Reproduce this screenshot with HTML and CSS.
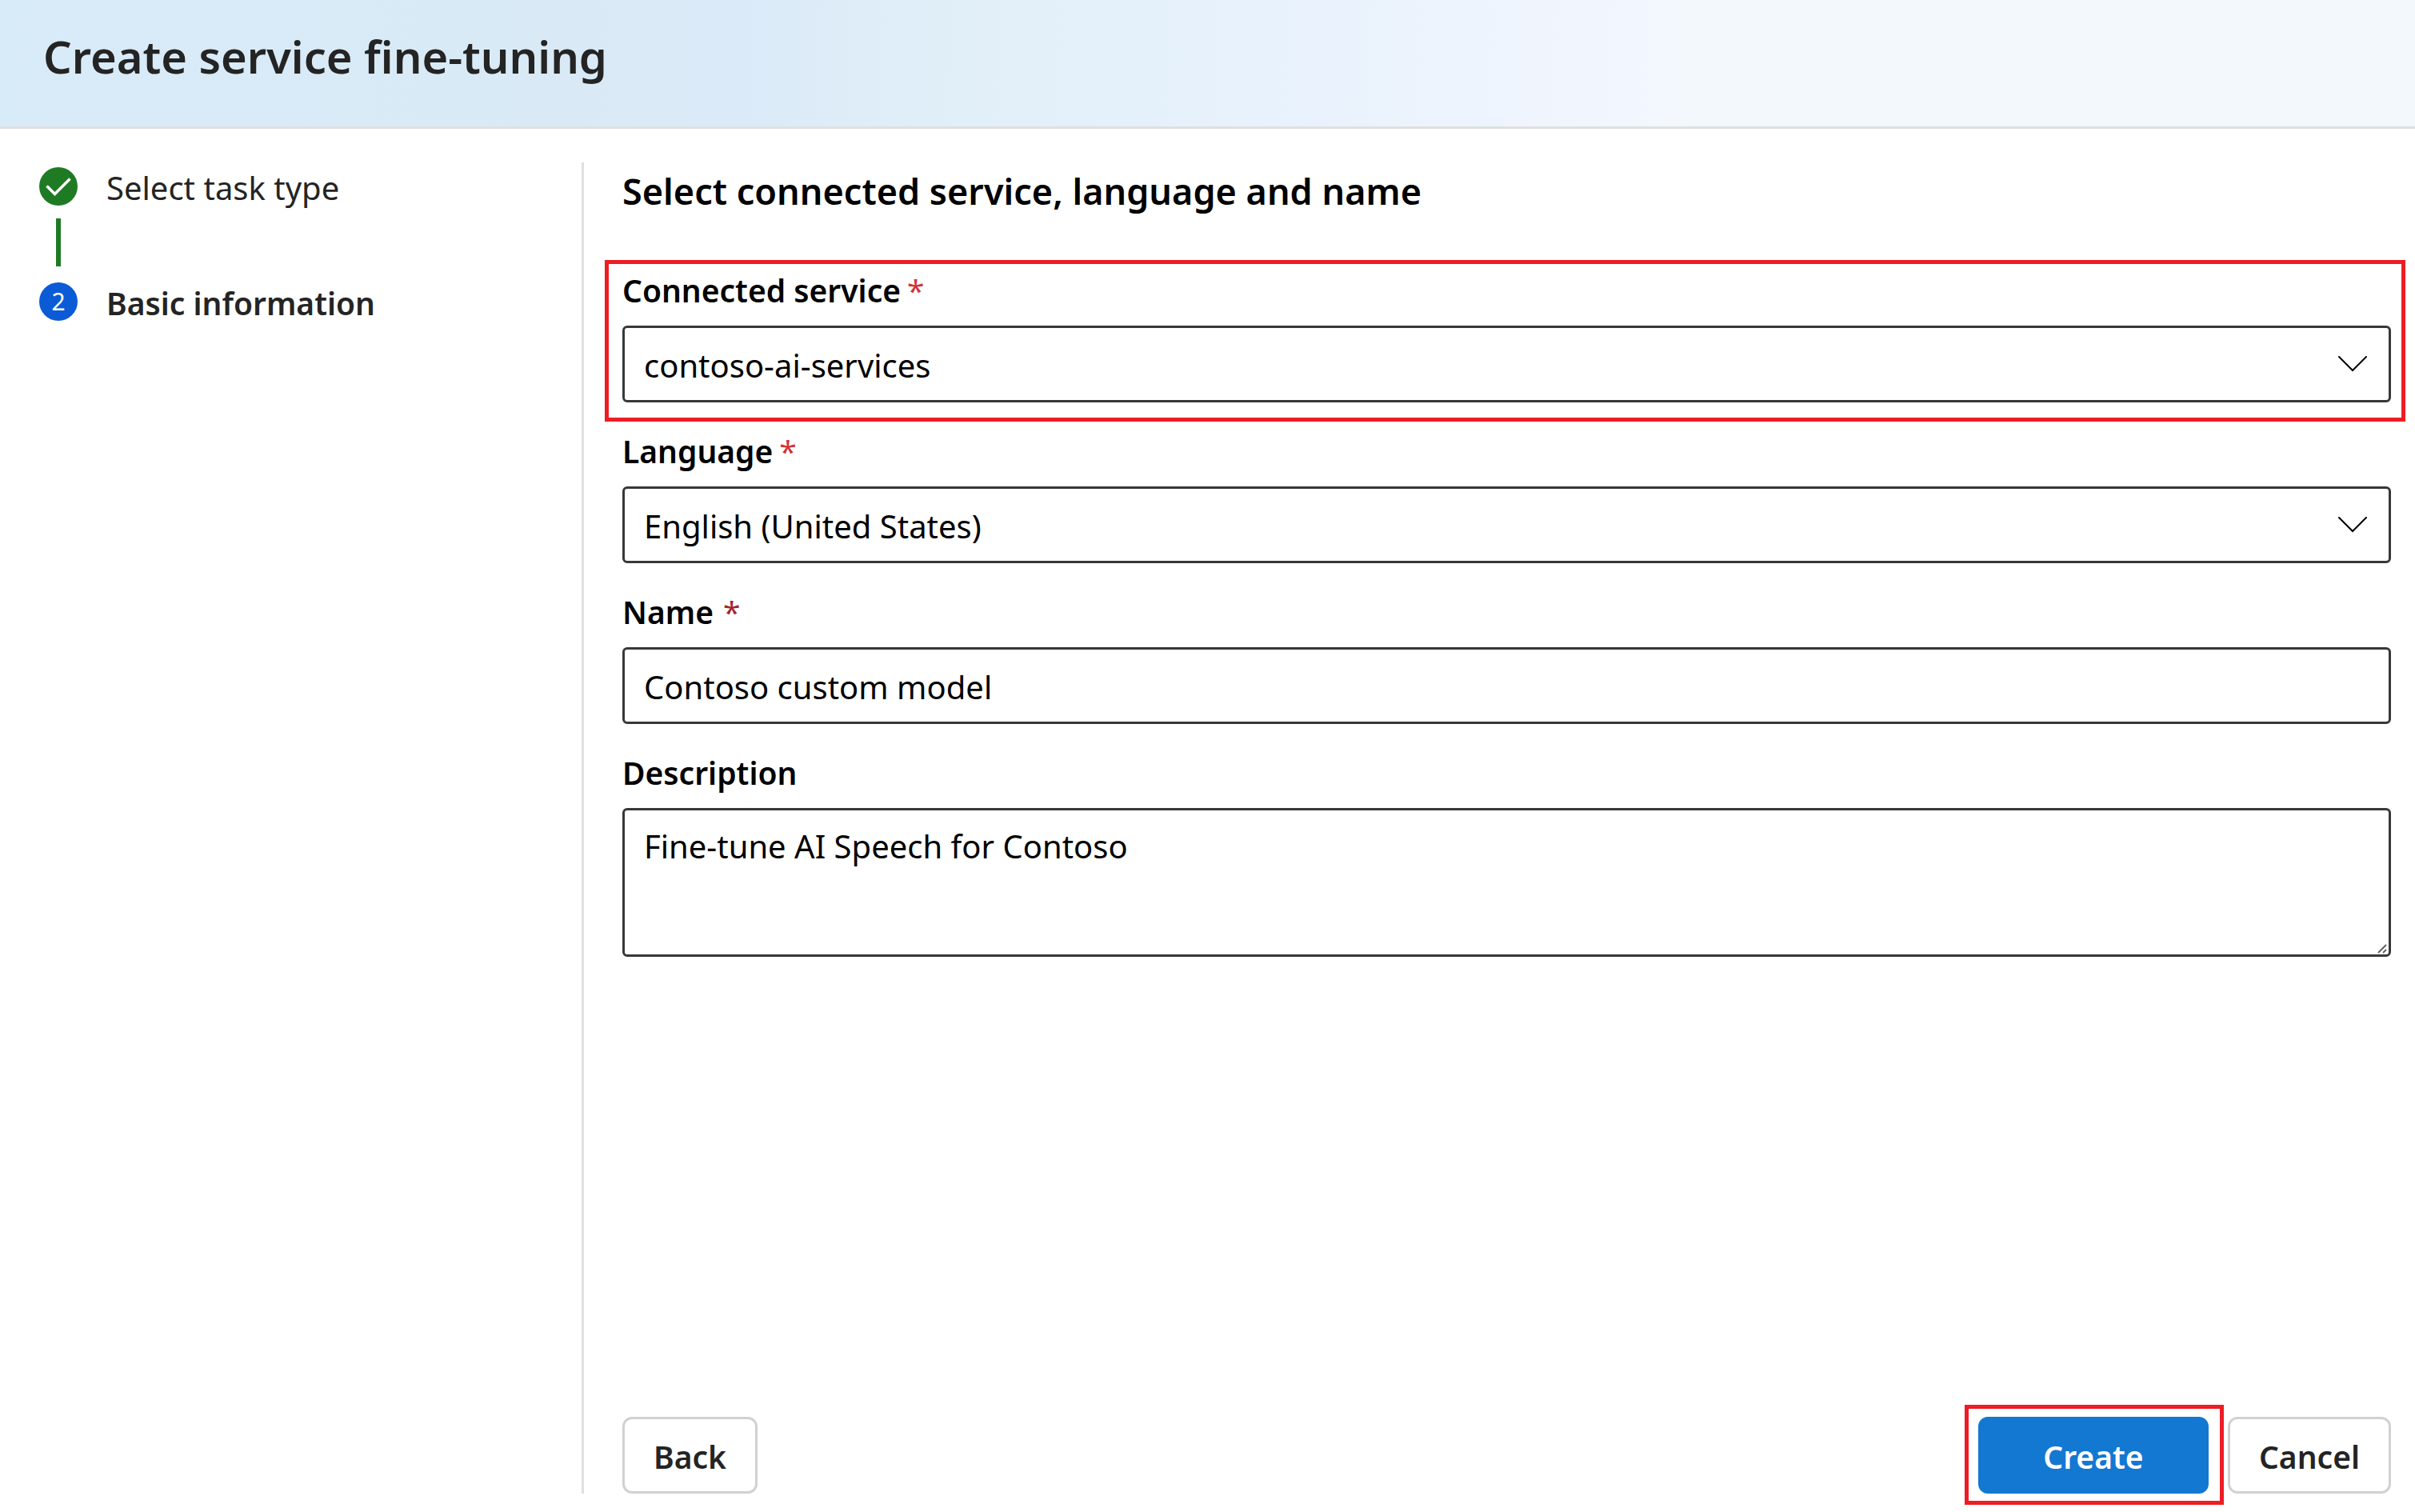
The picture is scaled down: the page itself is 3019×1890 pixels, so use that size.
FILE: index.html
```html
<!DOCTYPE html>
<html lang="en">
<head>
<meta charset="utf-8">
<title>Create service fine-tuning</title>
<link rel="stylesheet" href="styles.css">
</head>
<body>
<header class="banner">
  <h1 class="banner-title">Create service fine-tuning</h1>
</header>
<div class="wizard">
  <nav class="steps" aria-label="Progress">
    <ol class="step-list">
      <li class="step step-done">
        <svg class="step-badge" viewBox="0 0 48 48" aria-hidden="true">
          <circle cx="24" cy="24" r="24" fill="#1e7b23"/>
          <path d="M9.500 23.500L19.500 33.500L38.500 14.500" fill="none" stroke="#fff" stroke-width="3.500"/>
        </svg>
        <span class="step-label">Select task type</span>
      </li>
      <li class="step step-current" aria-current="step">
        <span class="step-badge step-number">2</span>
        <span class="step-label">Basic information</span>
      </li>
    </ol>
  </nav>
  <form class="panel">
    <h2 class="panel-title">Select connected service, language and name</h2>
    <div class="fields">
      <div class="field highlight highlight-field">
        <label class="label" for="service">Connected service<span class="required">*</span></label>
        <div class="control-box">
          <select class="control" id="service" required><option>contoso-ai-services</option></select>
          <svg class="chevron" viewBox="0 0 36 20" aria-hidden="true"><path d="M1 1L18 18L35 1"/></svg>
        </div>
      </div>
      <div class="field">
        <label class="label" for="language">Language<span class="required">*</span></label>
        <div class="control-box">
          <select class="control" id="language" required><option>English (United States)</option></select>
          <svg class="chevron" viewBox="0 0 36 20" aria-hidden="true"><path d="M1 1L18 18L35 1"/></svg>
        </div>
      </div>
      <div class="field">
        <label class="label" for="name">Name<span class="required required-dark">*</span></label>
        <input class="control" id="name" type="text" value="Contoso custom model" required>
      </div>
      <div class="field">
        <label class="label" for="description">Description</label>
        <div class="control-box">
          <textarea class="control control-area" id="description">Fine-tune AI Speech for Contoso</textarea>
          <svg class="grip" viewBox="0 0 12 12" aria-hidden="true"><path d="M1 11L11 1M7 11L11 7"/></svg>
        </div>
      </div>
    </div>
    <div class="actions">
      <button class="button" type="button">Back</button>
      <div class="actions-end">
        <span class="highlight highlight-button"><button class="button button-primary" type="submit">Create</button></span>
        <button class="button" type="button">Cancel</button>
      </div>
    </div>
  </form>
</div>
</body>
</html>
```
FILE: styles.css
```css
* {
  box-sizing: border-box;
}

body {
  margin: 0;
  min-height: 100vh;
  display: flex;
  flex-direction: column;
  background: #fff;
  color: #000;
  font-family: "Noto Sans", "Open Sans", sans-serif;
  font-size: 40px;
  line-height: 60px;
}

.banner {
  padding: 28px 54px 46px;
  border-bottom: 3px solid #e0e0e0;
  background: linear-gradient(92deg, #d8ebf8 0%, #d9eaf6 24%, #dbeaf8 31%, #e1eff8 40%, #e8f2fc 53%, #f1f5fe 66%, #f3f8fd 70%, #f3f8fd 100%);
}

.banner-title {
  margin: 0;
  color: #242424;
  font-size: 56px;
  font-weight: 600;
  line-height: 84px;
}

.wizard {
  flex: 1;
  display: flex;
  padding: 42px 30px 23px 0;
}

.steps {
  flex: 0 0 730px;
  padding-left: 49px;
  border-right: 3px solid #e0e0e0;
}

.step-list {
  display: flex;
  flex-direction: column;
  gap: 84px;
  margin: 0;
  padding: 0;
  list-style: none;
}

.step {
  position: relative;
  display: flex;
  align-items: center;
  gap: 36px;
  height: 60px;
  color: #242424;
}

.step-done::after {
  content: "";
  position: absolute;
  top: 70px;
  left: 21px;
  width: 6px;
  height: 60px;
  background: #1e7b23;
}

.step-badge {
  flex: none;
  width: 48px;
  height: 48px;
}

.step-number {
  border-radius: 50%;
  background: #0b5bd7;
  color: #fff;
  font-size: 30px;
  line-height: 48px;
  text-align: center;
}

.step-label {
  padding-top: 4px;
}

.step-current .step-label {
  font-size: 39px;
  font-weight: 600;
}

.panel {
  flex: 1;
  display: flex;
  flex-direction: column;
  padding-left: 48px;
}

.panel-title {
  margin: 0 0 58px;
  font-size: 45px;
  font-weight: 600;
  line-height: 72px;
}

.fields {
  display: flex;
  flex-direction: column;
  gap: 31px;
}

.field {
  display: flex;
  flex-direction: column;
  gap: 14px;
}

.label {
  font-size: 39px;
  font-weight: 600;
}

.required {
  margin-left: 8px;
  color: #d13438;
  font-weight: 400;
}

.required-dark {
  margin-left: 12px;
  color: #a4262c;
}

.control-box {
  display: grid;
  align-items: center;
}

.control-box > * {
  grid-area: 1 / 1;
}

.chevron {
  justify-self: end;
  width: 36px;
  height: 20px;
  margin-right: 30px;
  fill: none;
  stroke: #000;
  stroke-width: 2;
  stroke-linecap: round;
  pointer-events: none;
}

.grip {
  align-self: end;
  justify-self: end;
  width: 12px;
  height: 12px;
  margin: 0 5px 4px 0;
  fill: none;
  stroke: #606060;
  stroke-width: 2;
  pointer-events: none;
}

.control {
  width: 100%;
  height: 96px;
  padding: 3px 24px 0;
  border: 3px solid #383838;
  border-radius: 6px;
  background: #fff;
  color: #000;
  font: inherit;
  appearance: none;
}

.control-area {
  height: 186px;
  padding-top: 15px;
  resize: vertical;
}

.control-area::-webkit-resizer {
  background: transparent;
}

.highlight {
  position: relative;
}

.highlight::after {
  content: "";
  position: absolute;
  border: 5px solid #ee1c24;
  pointer-events: none;
}

.highlight-field::after {
  inset: -8px -18px -24px -22px;
}

.highlight-button::after {
  inset: -15px -19px -14px -17px;
}

.actions {
  display: flex;
  justify-content: space-between;
  margin-top: auto;
}

.actions-end {
  display: flex;
  gap: 24px;
}

.highlight-button {
  display: flex;
}

.button {
  height: 96px;
  padding: 3px 36px 0;
  border: 3px solid #d1d1d1;
  border-radius: 12px;
  background: #fff;
  color: #242424;
  font: inherit;
  font-size: 39px;
  font-weight: 600;
}

.button-primary {
  min-width: 288px;
  border-color: #1378d1;
  background: #1378d1;
  color: #fff;
}
```
